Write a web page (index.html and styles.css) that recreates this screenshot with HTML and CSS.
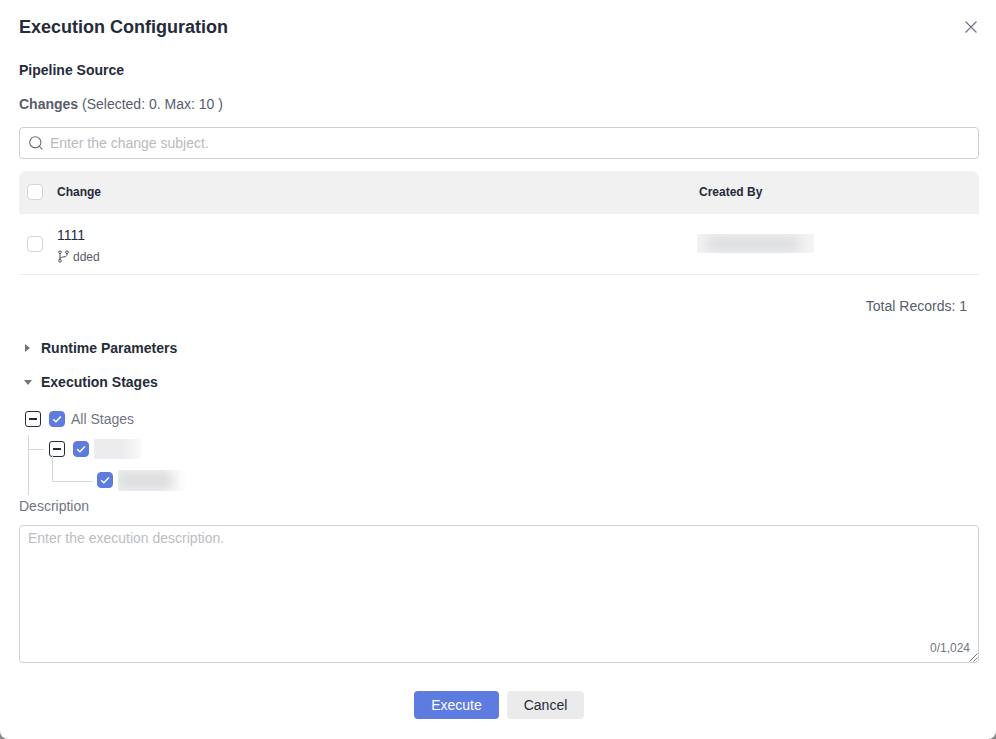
FILE: index.html
```html
<!DOCTYPE html>
<html lang="en">
<head>
<meta charset="utf-8">
<title>Execution Configuration</title>
<link rel="stylesheet" href="styles.css">
</head>
<body>
<div class="dialog">
  <header class="dialog-head">
    <h1 class="title">Execution Configuration</h1>
    <button class="close" aria-label="Close">
      <svg width="14" height="14" viewBox="0 0 14 14"><path d="M1.5 1.5l11 11M12.5 1.5l-11 11" stroke="#6e7180" stroke-width="1.1" fill="none"/></svg>
    </button>
  </header>
  <h2 class="source">Pipeline Source</h2>
  <p class="changes"><b>Changes</b> (Selected: 0. Max: 10 )</p>
  <div class="search">
    <svg width="16" height="16" viewBox="0 0 16 16"><circle cx="7.3" cy="7.3" r="5.6" stroke="#6b6e7a" stroke-width="1.1" fill="none"/><path d="M11.4 11.4l2.9 2.9" stroke="#6b6e7a" stroke-width="1.1" fill="none"/></svg>
    <span class="placeholder">Enter the change subject.</span>
  </div>
  <div class="table">
    <div class="thead">
      <span class="cb"></span>
      <span class="col-change">Change</span>
      <span class="col-by">Created By</span>
    </div>
    <div class="tbody">
      <span class="cb"></span>
      <div class="col-change">
        <div class="subject">1111</div>
        <div class="branch">
          <svg width="13" height="13" viewBox="0 0 13 13"><g fill="none" stroke="#4d505c" stroke-width="1"><circle cx="3" cy="2.2" r="1.3"/><circle cx="3" cy="10.8" r="1.3"/><circle cx="10" cy="2.2" r="1.3"/><path d="M3 3.5v6M10 3.5v.8c0 1.8-1.4 2.4-3 2.6-2 .2-4 .6-4 2"/></g></svg>
          <span>dded</span>
        </div>
      </div>
      <div class="col-by"><div class="mask mask-user"><i></i></div></div>
    </div>
  </div>
  <div class="total">Total Records: 1</div>
  <div class="section runtime"><span class="tri tri-right"></span>Runtime Parameters</div>
  <div class="section stages"><span class="tri tri-down"></span>Execution Stages</div>
  <div class="tree">
    <div class="node n0">
      <span class="toggle"></span>
      <span class="cb checked"><svg width="12" height="12" viewBox="0 0 12 12"><path d="M2.2 6.2l2.7 2.6 5-5.2" stroke="#fff" stroke-width="1.5" fill="none"/></svg></span>
      <span class="node-label">All Stages</span>
    </div>
    <div class="node n1">
      <span class="toggle"></span>
      <span class="cb checked"><svg width="12" height="12" viewBox="0 0 12 12"><path d="M2.2 6.2l2.7 2.6 5-5.2" stroke="#fff" stroke-width="1.5" fill="none"/></svg></span>
      <div class="mask mask-stage"></div>
    </div>
    <div class="node n2">
      <span class="cb checked"><svg width="12" height="12" viewBox="0 0 12 12"><path d="M2.2 6.2l2.7 2.6 5-5.2" stroke="#fff" stroke-width="1.5" fill="none"/></svg></span>
      <div class="mask mask-job"><i></i></div>
    </div>
  </div>
  <div class="desc-label">Description</div>
  <div class="textarea">
    <span class="ta-placeholder">Enter the execution description.</span>
    <span class="count">0/1,024</span>
    <svg class="grip" width="10" height="10" viewBox="0 0 10 10"><path d="M9.5 1.5l-8 8M9.5 5.5l-4 4" stroke="#777" stroke-width="1" fill="none"/></svg>
  </div>
  <footer class="actions">
    <button class="btn primary">Execute</button>
    <button class="btn secondary">Cancel</button>
  </footer>
</div>
</body>
</html>
```
FILE: styles.css
```css
* { box-sizing: border-box; }
html, body { margin: 0; height: 739px; overflow: hidden; background: #8c8c8c; }
body { font-family: "Liberation Sans", Arial, sans-serif; color: #252b3a; }
.dialog {
  width: 996px;
  height: 739px;
  background: #fff;
  border-radius: 0 0 8px 8px;
  padding: 0 18px 0 19px;
  display: flex;
  flex-direction: column;
}
.dialog-head { display: flex; align-items: center; justify-content: space-between; height: 54px; }
.title { margin: 0; font-size: 18px; line-height: 54px; font-weight: 700; color: #252b3a; }
.close { border: 0; background: none; padding: 0; width: 14px; height: 14px; display: flex; }
.source { margin: 8px 0 0; font-size: 14px; line-height: 16px; font-weight: 700; }
.changes { margin: 18px 0 0; font-size: 14px; line-height: 16px; color: #575d6c; }
.changes b { font-weight: 700; }
.search {
  margin-top: 15px;
  width: 960px;
  height: 32px;
  border: 1px solid #d0d0d0;
  border-radius: 4px;
  display: flex;
  align-items: center;
  padding-left: 8px;
  gap: 6px;
  font-size: 14px;
}
.placeholder { color: #b8bac0; }
.table { margin-top: 12px; width: 960px; }
.thead {
  height: 43px;
  background: #f1f1f1;
  border-radius: 8px 8px 0 0;
  display: flex;
  align-items: center;
  padding: 0 0 2px 8px;
  font-size: 12px;
  font-weight: 700;
}
.tbody {
  height: 61px;
  border-bottom: 1px solid #ebedf2;
  display: flex;
  align-items: center;
  padding-left: 8px;
}
.cb {
  flex: none;
  width: 16px;
  height: 16px;
  border: 1px solid #d3d5d9;
  border-radius: 4px;
  background: #fff;
  display: flex;
  align-items: center;
  justify-content: center;
}
.cb.checked { background: #5e7ce0; border-color: #5e7ce0; }
.col-change { margin-left: 14px; width: 642px; flex: none; }
.subject { font-size: 14px; line-height: 16px; color: #252b3a; margin-top: 2px; }
.branch { display: flex; align-items: center; gap: 3px; margin-top: 7px; font-size: 12px; line-height: 14px; color: #575d6c; }
.mask { overflow: hidden; background: #f3f3f4; position: relative; }
.mask i { display: block; position: absolute; background: #dadbde; filter: blur(6px); }
.mask-user { width: 117px; height: 19px; margin: -1px 0 0 -2px; }
.mask-user i { left: 10px; top: 3px; width: 92px; height: 14px; }
.total { margin-top: 23px; width: 948px; text-align: right; font-size: 14px; line-height: 16px; color: #575d6c; }
.section {
  display: flex;
  align-items: center;
  font-size: 14px;
  line-height: 16px;
  font-weight: 700;
  padding-left: 6px;
}
.runtime { margin-top: 26px; }
.stages { margin-top: 18px; }
.tri { width: 16px; height: 16px; display: flex; flex: none; position: relative; }
.tri::before { content: ""; position: absolute; border-style: solid; border-color: transparent; }
.tri-right::before { left: 0; top: 4px; border-width: 4.5px 0 4.5px 5.5px; border-left-color: #71757f; }
.tri-down::before { left: -1px; top: 6px; border-width: 5px 4px 0 4px; border-top-color: #71757f; }
.tree { margin-top: 14px; position: relative; height: 94px; }
.node { display: flex; align-items: center; height: 30px; position: relative; }
.n0 { padding-left: 6px; }
.n1 { padding-left: 30px; }
.n2 { padding-left: 78px; height: 32px; }
.node .cb { margin-left: 8px; }
.n2 .cb { margin-left: 0; }
.toggle {
  flex: none;
  width: 16px;
  height: 16px;
  border: 1px solid #252b3a;
  border-radius: 3px;
  background: #fff;
  position: relative;
}
.toggle::before { content: ""; position: absolute; left: 3px; right: 3px; top: 6px; height: 2px; background: #252b3a; }
.node-label { margin-left: 6px; font-size: 14px; color: #71757f; }
.n1 .mask, .n2 .mask { margin-left: 5px; }
.mask-stage { width: 47px; height: 20px; background: linear-gradient(90deg, #ececee 0 60%, #fafafa 100%); }
.mask-job { width: 70px; height: 21px; background: linear-gradient(90deg, #eeeeef 0 60%, #fff 100%); }
.mask-job i { left: 2px; top: 3px; width: 52px; height: 15px; background: #dcdddf; filter: blur(5px); }
.n0::after { content: ""; position: absolute; left: 9px; top: 31px; width: 0; height: 60px; border-left: 1px solid #d6d7d9; }
.n1::before { content: ""; position: absolute; left: 9px; top: 15px; width: 16px; height: 0; border-top: 1px solid #d6d7d9; }
.n2::before { content: ""; position: absolute; left: 33px; top: -9px; width: 40px; height: 26px; border-left: 1px solid #d6d7d9; border-bottom: 1px solid #d6d7d9; }
.desc-label { font-size: 14px; line-height: 16px; color: #71757f; }
.textarea {
  margin-top: 11px;
  width: 960px;
  height: 138px;
  border: 1px solid #d0d0d0;
  border-radius: 4px;
  position: relative;
  padding: 4px 8px;
  font-size: 14px;
  line-height: 16px;
}
.ta-placeholder { color: #bbbdc2; }
.count { position: absolute; right: 8px; bottom: 7px; font-size: 12px; line-height: 14px; color: #71757f; }
.grip { position: absolute; right: 0; bottom: 0; }
.actions { margin-top: 28px; display: flex; justify-content: center; gap: 8px; padding-left: 1px; }
.btn { height: 28px; border: 0; border-radius: 4px; font: 14px "Liberation Sans", Arial, sans-serif; padding: 0; }
.primary { width: 85px; background: #5e7ce0; color: #fff; }
.secondary { width: 77px; background: #ebebeb; color: #252b3a; }
```
